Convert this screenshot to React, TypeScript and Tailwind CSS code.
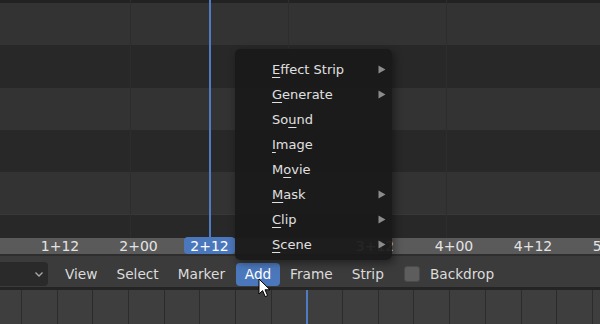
import React from "react";

const font = { fontFamily: '"DejaVu Sans", "Liberation Sans", sans-serif' };

function Mn({ pre, u, post }: { pre?: string; u: string; post?: string }) {
  return (
    <span>
      {pre}
      <span className="underline decoration-1 underline-offset-[3px]">{u}</span>
      {post}
    </span>
  );
}

const menuItems: { pre?: string; u: string; post?: string; sub: boolean }[] = [
  { u: "E", post: "ffect Strip", sub: true },
  { u: "G", post: "enerate", sub: true },
  { pre: "So", u: "u", post: "nd", sub: false },
  { u: "I", post: "mage", sub: false },
  { pre: "M", u: "o", post: "vie", sub: false },
  { u: "M", post: "ask", sub: true },
  { u: "C", post: "lip", sub: true },
  { u: "S", post: "cene", sub: true },
];

const rulerLabels = [
  { x: 60, t: "1+12" },
  { x: 138.5, t: "2+00" },
  { x: 375, t: "3+12" },
  { x: 454, t: "4+00" },
  { x: 533, t: "4+12" },
  { x: 612, t: "5+00" },
];

export default function App() {
  const bottomLines = Array.from({ length: 17 }, (_, k) => 21 + k * 35.68);
  return (
    <div
      className="relative w-[600px] h-[324px] overflow-hidden flex flex-col bg-[#282828] select-none"
      style={font}
    >
      {/* Top sequencer area */}
      <div className="relative h-[238px] flex flex-col">
        <div className="h-[3px] bg-[#222222]" />
        <div className="h-[42px] bg-[#333333]" />
        <div className="h-[43px] bg-[#282828]" />
        <div className="h-[42px] bg-[#333333]" />
        <div className="h-[42px] bg-[#282828]" />
        <div className="h-[42px] bg-[#333333]" />
        <div className="flex-1 bg-[#282828] border-t border-[#383838]" />
        {[130, 288, 446].map((x) => (
          <div
            key={x}
            className="absolute top-0 bottom-0 w-px bg-[#2d2d2d]"
            style={{ left: x }}
          />
        ))}
        <div className="absolute top-0 bottom-0 left-[209px] w-[2px] bg-[#4f7bc2]" />
      </div>

      {/* Ruler */}
      <div className="relative h-[16px] bg-[#5a5a5a] text-[14px] leading-[16px] text-[#e4e4e4]">
        {rulerLabels.map((l) => (
          <span
            key={l.t}
            className="absolute top-0 -translate-x-1/2 whitespace-nowrap"
            style={{ left: l.x }}
          >
            {l.t}
          </span>
        ))}
        <div className="absolute left-[184px] top-[-1px] w-[51px] h-[17px] rounded-[4px] bg-[#4b78bd] text-white flex items-center justify-center">
          2+12
        </div>
      </div>
      <div className="h-[2px] bg-[#2e2e2e]" />

      {/* Header */}
      <div className="h-[31px] pt-[5px] bg-[#3b3b3b] flex items-center text-[13.7px] text-[#dcdcdc]">
        <div className="w-[48px] h-[24px] bg-[#2a2a2a] rounded-r-[4px] flex items-center justify-end pr-[4px]">
          <svg width="10" height="7" viewBox="0 0 10 7">
            <path d="M1.5 1.5 L5 5 L8.5 1.5" stroke="#a8a8a8" strokeWidth="1.4" fill="none" />
          </svg>
        </div>
        <div className="ml-[17px] flex items-center">
          <span className="mr-[19px]">View</span>
          <span className="mr-[19px]">Select</span>
          <span className="mr-[11px]">Marker</span>
          <span className="h-[23px] w-[44px] rounded-[4px] bg-[#4b78bd] text-white flex items-center justify-center">
            Add
          </span>
          <span className="ml-[10px] mr-[19px]">Frame</span>
          <span>Strip</span>
          <span className="ml-[20px] w-[16px] h-[16px] rounded-[3px] bg-[#5d5d5d] border border-[#4a4a4a]" />
          <span className="ml-[10px]">Backdrop</span>
        </div>
      </div>
      <div className="h-[3px] bg-[#242424]" />

      {/* Bottom area */}
      <div className="relative flex-1 bg-[#3e3e3e]">
        {bottomLines.map((x, k) =>
          k === 8 ? null : (
            <div
              key={k}
              className="absolute top-0 bottom-0 w-px bg-[#2c2c2c]"
              style={{ left: Math.round(x) }}
            />
          )
        )}
        <div className="absolute top-0 bottom-0 left-[306px] w-[2px] bg-[#4f7bc2]" />
      </div>

      {/* Add menu */}
      <div className="absolute left-[235px] top-[49px] w-[157px] h-[211px] rounded-[5px] bg-[#1a1a1a]/[0.94] shadow-[2px_3px_8px_rgba(0,0,0,0.45)] pt-[8px] text-[13px] text-[#e0e0e0]">
        {menuItems.map((it, i) => (
          <div key={i} className="h-[25px] flex items-center pl-[37px] pr-[6px]">
            <span className="flex-1">
              <Mn pre={it.pre} u={it.u} post={it.post} />
            </span>
            {it.sub && (
              <svg width="8" height="9" viewBox="0 0 8 9">
                <path d="M0.5 0.5 L7.5 4.5 L0.5 8.5 Z" fill="#8c8c8c" />
              </svg>
            )}
          </div>
        ))}
      </div>

      {/* Mouse cursor */}
      <svg
        className="absolute left-[258px] top-[278px]"
        width="16"
        height="22"
        viewBox="0 0 16 22"
      >
        <path
          d="M1 1 L1 16 L4.6 12.6 L7.2 18.6 L9.6 17.6 L7 11.8 L12 11.8 Z"
          fill="#ffffff"
          stroke="#000000"
          strokeWidth="1"
          strokeLinejoin="round"
        />
      </svg>
    </div>
  );
}
